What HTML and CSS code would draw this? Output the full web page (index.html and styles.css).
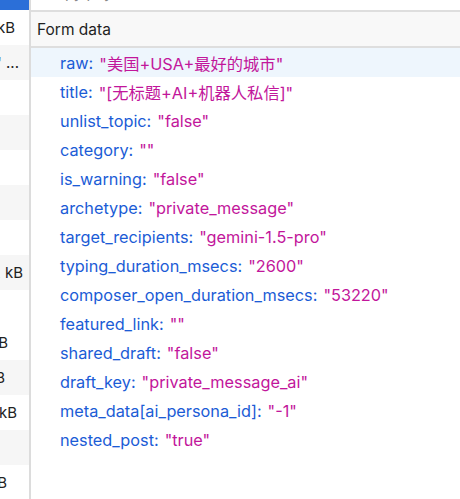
FILE: index.html
```html
<!DOCTYPE html>
<html lang="en">
<head>
    <meta charset="UTF-8">
    <title>Payload</title>
    <link rel="stylesheet" href="styles.css">
</head>
<body>
    <div class="list">
        <div class="selected"></div>
        <div class="cell"><span class="size s1">1.2 kB</span></div>
        <div class="cell odd"><span class="size s2">ws' ...</span></div>
        <div class="cell"></div>
        <div class="cell odd"></div>
        <div class="cell"></div>
        <div class="cell odd"></div>
        <div class="cell"></div>
        <div class="cell odd"><span class="size s3">12 kB</span></div>
        <div class="cell"></div>
        <div class="cell"><span class="size s4">0 B</span></div>
        <div class="cell odd"><span class="size s5">0 B</span></div>
        <div class="cell"><span class="size s6">1.8 kB</span></div>
        <div class="cell odd"></div>
        <div class="cell"><span class="size s7">0 B</span></div>
    </div>

    <div class="panel">
        <div class="top"><span class="cut">Copy payload</span></div>
        <div class="head">Form data</div>
        <div class="rows">
            <div class="row hover"><span class="key">raw:</span><span class="val">"美国+USA+最好的城市"</span></div>
            <div class="row"><span class="key">title:</span><span class="val">"[无标题+AI+机器人私信]"</span></div>
            <div class="row"><span class="key">unlist_topic:</span><span class="val">"false"</span></div>
            <div class="row"><span class="key">category:</span><span class="val">""</span></div>
            <div class="row"><span class="key">is_warning:</span><span class="val">"false"</span></div>
            <div class="row"><span class="key">archetype:</span><span class="val">"private_message"</span></div>
            <div class="row"><span class="key">target_recipients:</span><span class="val">"gemini-1.5-pro"</span></div>
            <div class="row"><span class="key">typing_duration_msecs:</span><span class="val">"2600"</span></div>
            <div class="row"><span class="key">composer_open_duration_msecs:</span><span class="val">"53220"</span></div>
            <div class="row"><span class="key">featured_link:</span><span class="val">""</span></div>
            <div class="row"><span class="key">shared_draft:</span><span class="val">"false"</span></div>
            <div class="row"><span class="key">draft_key:</span><span class="val">"private_message_ai"</span></div>
            <div class="row"><span class="key">meta_data[ai_persona_id]:</span><span class="val">"-1"</span></div>
            <div class="row"><span class="key">nested_post:</span><span class="val">"true"</span></div>
        </div>
    </div>
</body>
</html>
```

FILE: styles.css
```css
html,body{margin:0;padding:0;height:100%;}
body{display:flex;background:#fff;font-family:Inter,"Noto Sans CJK SC",sans-serif;overflow:hidden;}

.list{width:29px;flex:none;border-right:2px solid #dcdcdc;overflow:hidden;}
.selected{height:10px;background:#2b6fd8;}
.cell{height:35px;display:flex;align-items:center;justify-content:flex-end;overflow:hidden;white-space:nowrap;font-size:15px;color:#222;}
.cell.odd{background:#f6f6f6;}
.size{flex:none;}
.s1{margin-right:14px;}
.s2{margin-right:10px;}
.s3{margin-right:6px;}
.s4{margin-right:21px;}
.s5{margin-right:24px;}
.s6{margin-right:12px;}
.s7{margin-right:22px;}

.panel{flex:1;min-width:0;}
.top{height:10px;overflow:hidden;border-bottom:2px solid #dedede;}
.cut{display:block;margin-top:-17px;margin-left:14px;font-size:15px;line-height:20px;color:#888;}
.head{height:34px;display:flex;align-items:center;padding-left:6px;background:#f8f8f8;border-bottom:2px solid #dedede;font-size:15.5px;color:#1f1f1f;}

.row{height:29px;display:flex;align-items:center;padding-left:29px;font-size:16.3px;white-space:nowrap;}
.row.hover{background:#eef6fd;}
.key{color:#1b5cd6;margin-right:6px;}
.val{color:#c2169b;}
```
